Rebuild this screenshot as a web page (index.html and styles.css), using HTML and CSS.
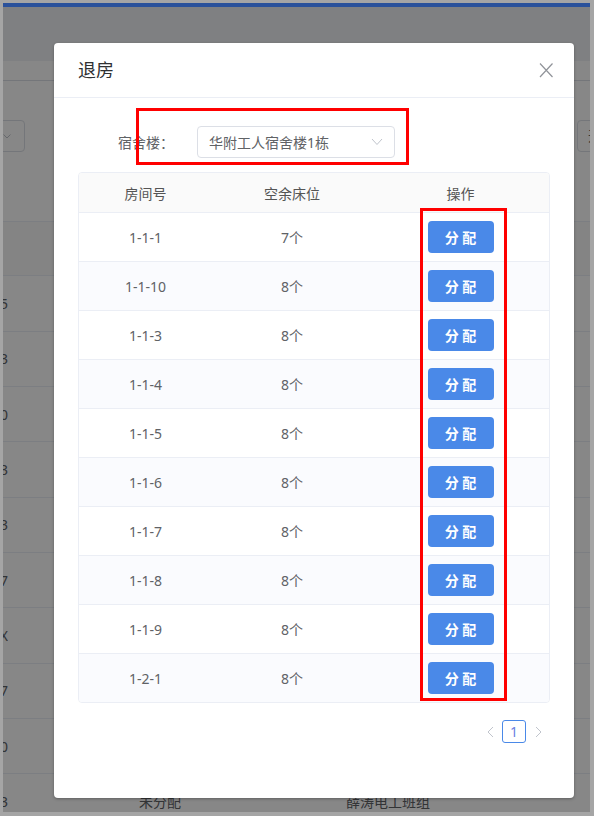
FILE: index.html
```html
<!DOCTYPE html>
<html lang="zh-CN">
<head>
    <meta charset="UTF-8">
    <meta name="viewport" content="width=device-width, initial-scale=1.0">
    <title>退房</title>
    <link rel="stylesheet" href="styles.css">
</head>
<body>
    <div class="screen">
        <div class="topbar"></div>

        <!-- page behind the dialog (only the edges show) -->
        <div class="page">
            <div class="page-head"></div>
            <div class="page-tabs"></div>
            <div class="filters">
                <div class="f-select">
                    <svg width="8" height="5" viewBox="0 0 8 5"><polyline points="0.5,0.5 4,4 7.5,0.5" fill="none" stroke="#c0c4cc" stroke-width="1"/></svg>
                </div>
                <div class="f-btn">开始</div>
            </div>
            <div class="bg-table">
                <div class="bg-row"><span></span><span></span><span></span><span></span></div>
                <div class="bg-row"><span>13800138005</span><span></span><span></span><span></span></div>
                <div class="bg-row"><span>13800138003</span><span></span><span></span><span></span></div>
                <div class="bg-row"><span>13800138000</span><span></span><span></span><span></span></div>
                <div class="bg-row"><span>13800138003</span><span></span><span></span><span></span></div>
                <div class="bg-row"><span>13800138003</span><span></span><span></span><span></span></div>
                <div class="bg-row"><span>13800138007</span><span></span><span></span><span></span></div>
                <div class="bg-row"><span>44010119900101X</span><span></span><span></span><span></span></div>
                <div class="bg-row"><span>13800138007</span><span></span><span></span><span></span></div>
                <div class="bg-row"><span>13800138000</span><span></span><span></span><span></span></div>
                <div class="bg-row"><span>13800138003</span><span>未分配</span><span>薛涛电工班组</span><span></span></div>
            </div>
        </div>

        <div class="mask"></div>

        <div class="modal">
            <div class="modal-head">
                <span class="modal-title">退房</span>
                <span class="modal-close">
                    <svg width="16" height="16" viewBox="0 0 16 16"><path d="M2 1.5 L14.5 15 M14.5 1.5 L2 15" fill="none" stroke="#909399" stroke-width="1.2"/></svg>
                </span>
            </div>
            <div class="modal-body">
                <div class="form-row">
                    <label class="form-label">宿舍楼：</label>
                    <div class="select">
                        <span>华附工人宿舍楼1栋</span>
                        <svg width="12" height="8" viewBox="0 0 12 8"><polyline points="1,1 6,6.5 11,1" fill="none" stroke="#c0c4cc" stroke-width="1"/></svg>
                    </div>
                </div>

                <div class="table">
                    <div class="tr thead"><span>房间号</span><span>空余床位</span><span>操作</span></div>
                    <div class="tr trow"><span>1-1-1</span><span>7个</span><span><button class="btn">分 配</button></span></div>
                    <div class="tr trow"><span>1-1-10</span><span>8个</span><span><button class="btn">分 配</button></span></div>
                    <div class="tr trow"><span>1-1-3</span><span>8个</span><span><button class="btn">分 配</button></span></div>
                    <div class="tr trow"><span>1-1-4</span><span>8个</span><span><button class="btn">分 配</button></span></div>
                    <div class="tr trow"><span>1-1-5</span><span>8个</span><span><button class="btn">分 配</button></span></div>
                    <div class="tr trow"><span>1-1-6</span><span>8个</span><span><button class="btn">分 配</button></span></div>
                    <div class="tr trow"><span>1-1-7</span><span>8个</span><span><button class="btn">分 配</button></span></div>
                    <div class="tr trow"><span>1-1-8</span><span>8个</span><span><button class="btn">分 配</button></span></div>
                    <div class="tr trow"><span>1-1-9</span><span>8个</span><span><button class="btn">分 配</button></span></div>
                    <div class="tr trow"><span>1-2-1</span><span>8个</span><span><button class="btn">分 配</button></span></div>
                </div>

                <div class="pager">
                    <span class="page-arrow">
                        <svg width="7" height="12" viewBox="0 0 7 12"><polyline points="6,1 1,6 6,11" fill="none" stroke="#c0c4cc" stroke-width="1"/></svg>
                    </span>
                    <span class="page-num">1</span>
                    <span class="page-arrow">
                        <svg width="7" height="12" viewBox="0 0 7 12"><polyline points="1,1 6,6 1,11" fill="none" stroke="#c0c4cc" stroke-width="1"/></svg>
                    </span>
                </div>
            </div>

            <!-- red highlight boxes -->
            <div class="mark mark-select"></div>
            <div class="mark mark-ops"></div>
        </div>
    </div>
</body>
</html>
```

FILE: styles.css
```css
body {
    margin: 0;
    padding: 3px 4px 4px 3px;
    background-color: #a5a5a5;
    font-family: "Noto Sans", "Noto Sans CJK SC", sans-serif;
}

.screen {
    position: relative;
    height: 809px;
    overflow: hidden;
    background-color: #fff;
}

.topbar {
    height: 4px;
    background-color: #2a519b;
}

/* background page */
.page-head {
    height: 54px;
    background-color: #f0f2f5;
}

.page-tabs {
    height: 19px;
    border-bottom: 1px solid #dcdfe6;
}

.filters {
    display: flex;
    justify-content: space-between;
    height: 32px;
    margin-top: 39px;
}

.f-select {
    width: 100px;
    margin-left: -78px;
    box-sizing: border-box;
    border: 1px solid #dcdfe6;
    border-radius: 4px;
    display: flex;
    align-items: center;
    justify-content: flex-end;
    padding-right: 13px;
}

.f-btn {
    width: 73px;
    margin-right: -60px;
    box-sizing: border-box;
    border: 1px solid #dcdfe6;
    border-radius: 4px;
    padding-left: 10px;
    line-height: 30px;
    font-size: 14px;
    color: #606266;
}

.bg-table {
    margin-top: 69px;
    margin-left: -55px;
}

.bg-row {
    display: grid;
    grid-template-columns: 60px 304px 152px 1fr;
    align-items: center;
    height: 55.33px;
    box-sizing: border-box;
    border-bottom: 1px solid #ebeef5;
    font-size: 14px;
    color: #606266;
    text-align: center;
}

.bg-row:first-child {
    border-top: 1px solid #ebeef5;
    background-color: #fafafa;
}

.bg-row span:first-child {
    text-align: right;
    white-space: nowrap;
    overflow: hidden;
    direction: rtl;
}

.mask {
    position: absolute;
    top: 4px;
    left: 0;
    right: 0;
    bottom: 0;
    background-color: rgba(0, 0, 0, 0.47);
}

/* dialog */
.modal {
    position: absolute;
    left: 51px;
    top: 40px;
    width: 520px;
    background-color: #fff;
    border-radius: 4px;
    box-shadow: 0 1px 3px rgba(0, 0, 0, 0.3);
}

.modal-head {
    display: flex;
    justify-content: space-between;
    align-items: center;
    padding: 15px 20px 15px 24px;
    border-bottom: 1px solid #ebeef5;
}

.modal-title {
    font-size: 18px;
    line-height: 24px;
    color: #303133;
}

.modal-close {
    display: flex;
    width: 16px;
    height: 16px;
}

.modal-body {
    padding: 28px 24px 55px;
}

.form-row {
    display: flex;
    align-items: center;
    padding-left: 40px;
    margin-bottom: 14px;
}

.form-label {
    width: 56px;
    margin-right: 23px;
    font-size: 14px;
    color: #606266;
    white-space: nowrap;
}

.select {
    width: 198px;
    height: 32px;
    box-sizing: border-box;
    border: 1px solid #dcdfe6;
    border-radius: 4px;
    padding: 0 11px 0 11px;
    display: flex;
    align-items: center;
    justify-content: space-between;
    font-size: 14px;
    color: #606266;
}

.table {
    border: 1px solid #ebeef5;
    border-radius: 4px;
    overflow: hidden;
}

.tr {
    display: grid;
    grid-template-columns: 133px 160px 1fr;
    align-items: center;
    text-align: center;
    font-size: 14px;
    color: #606266;
    border-bottom: 1px solid #ebeef5;
}

.tr:last-child {
    border-bottom: none;
}

.thead {
    height: 39px;
    background-color: #fafafa;
    color: #555;
}

.trow {
    height: 48px;
}

.trow:nth-child(odd) {
    background-color: #fafbfe;
}

.btn {
    width: 66px;
    height: 32px;
    border: none;
    border-radius: 4px;
    background-color: #4a89e8;
    color: #fff;
    font-family: inherit;
    font-size: 14px;
    font-weight: bold;
    display: block;
    margin: 0 auto;
    padding: 0;
}

.pager {
    display: flex;
    justify-content: flex-end;
    align-items: center;
    gap: 5px;
    margin-top: 17px;
    padding-right: 5px;
}

.page-arrow {
    display: flex;
    align-items: center;
    justify-content: center;
    width: 14px;
    height: 23px;
}

.page-num {
    width: 24px;
    height: 23px;
    box-sizing: border-box;
    border: 1px solid #4a89e8;
    border-radius: 3px;
    font-size: 14px;
    line-height: 21px;
    text-align: center;
    color: #6a7fe2;
}

.mark {
    position: absolute;
    box-sizing: border-box;
    border: 3px solid #ff0000;
}

.mark-select {
    left: 82px;
    top: 65px;
    width: 273px;
    height: 57px;
}

.mark-ops {
    left: 366px;
    top: 165px;
    width: 87px;
    height: 493px;
}
```
